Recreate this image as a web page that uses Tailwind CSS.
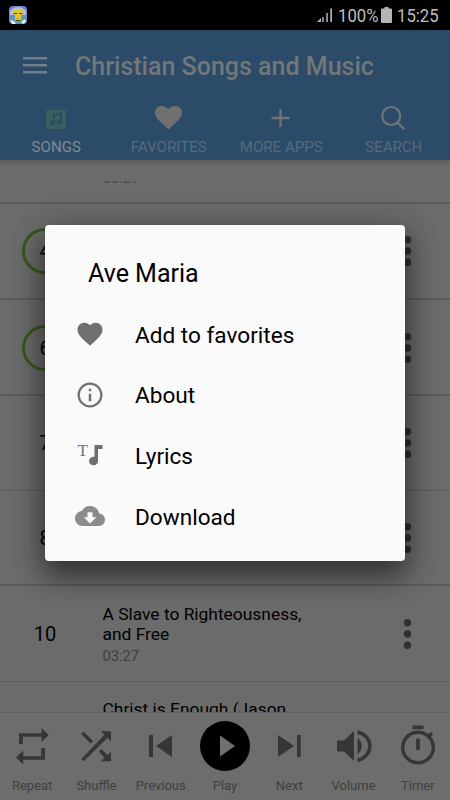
<!DOCTYPE html>
<html lang="en">
<head>
<meta charset="utf-8">
<meta name="viewport" content="width=device-width, initial-scale=1">
<title>Christian Songs and Music</title>
<script src="https://cdn.jsdelivr.net/npm/@tailwindcss/browser@4"></script>
</head>
<body class="bg-[#6b6b6b] font-[Roboto,sans-serif]">
<div class="relative flex h-[800px] w-[450px] flex-col overflow-hidden bg-[#6b6b6b]">
  <!-- Status bar -->
  <div class="flex h-[30px] shrink-0 items-center bg-black pl-[9px] pr-[12px] text-[#bdbdbd]">
    <svg class="h-[18px] w-[18px]" viewBox="0 0 18 18"><rect width="18" height="18" rx="4" fill="#6b86c8"/><path d="M1 5Q9-3 17 5V9H1Z" fill="#b5b9e6"/><path d="M2 10h14v4l-4 3H5l-3-3Z" fill="#5d9ab8"/><path d="M3 5.500Q9-.5 15 5.500L14 8.500H12V14L9 15.500 6 14V8.500H4Z" fill="#e0c928"/><path d="M4.500 7.500h3.500M10 7.500h3.500M7 14.500h4" stroke="#53491b"/><path d="M1 14l4 1 2 3H3ZM12 16l4-3 1 3-3 2Z" fill="#e8eef6"/><path d="M8 12.500h2" stroke="#e07c25"/></svg>
    <svg class="ml-auto h-[16px] w-[16px]" viewBox="0 0 16 16" fill="#b5b5b5"><path d="M0 15l4-4v4zM5.300 10h1.400v5H5.300zM9.300 6h1.500v9H9.300zM13.300 1.500H15V15h-1.700z"/></svg>
    <span class="ml-[5px] w-[40px] origin-left scale-x-[.88] whitespace-nowrap text-[19px] leading-[31px]">100%</span>
    <svg class="ml-[3px] h-[16px] w-[11px]" viewBox="0 0 11 16" fill="#b5b5b5"><path d="M3.500 0h4v1.500H10q1 0 1 1V15q0 1-1 1H1q-1 0-1-1V2.500q0-1 1-1h2.500z"/></svg>
    <span class="ml-[5px] w-[41px] origin-left scale-x-[.88] whitespace-nowrap text-[19px] leading-[31px]">15:25</span>
  </div>
  <!-- App bar -->
  <header class="z-10 flex h-[130px] shrink-0 flex-col bg-[#2c4b69] shadow-[0_2px_5px_rgba(0,0,0,.22)]">
    <div class="flex h-[73px] items-center pl-[23px] text-[#727778]">
      <svg class="h-[18px] w-[24px] -translate-y-[1.500px]" viewBox="0 0 24 18" fill="#727e89"><path d="M0 .5h24v2.600H0zM0 7.500h24v2.600H0zM0 14.400h24v2.600H0z"/></svg>
      <h1 class="ml-[28px] text-[25px] leading-[72px] font-medium whitespace-nowrap">Christian Songs and Music</h1>
    </div>
    <nav class="grid h-[57px] grid-cols-4 text-center text-[15.100px] text-[#58697a]">
      <div class="flex flex-col items-center text-[#818a92]"><svg class="h-[30px] w-[30px]" viewBox="0 0 30 30"><path d="M5 9Q5 7 7 7h16v0h2v17q0 2-2 2H7q-2 0-2-2z" fill="#38605f"/><path d="M5.500 4.800h18" stroke="#375863"/><path d="M13 19V12l7-1.500v8" fill="none" stroke="#2b4c61" stroke-width="2"/><circle cx="11.500" cy="20" r="2.500" fill="#2b4c61"/><circle cx="18.500" cy="19" r="2.500" fill="#2b4c61"/></svg><span class="mt-[4px] leading-[20px]">SONGS</span></div>
      <div class="flex flex-col items-center"><svg class="h-[30px] w-[30px] -translate-x-[.5px]" viewBox="0 0 30 30" fill="#707070"><path d="M15 26.500L13 24.700C6 18.300 1.500 14.300 1.500 9.800c0-4 3-6.700 6.800-6.700 2.600 0 5 1.200 6.700 3.200 1.700-2 4.100-3.200 6.700-3.200 3.800 0 6.800 2.700 6.800 6.700 0 4.500-4.500 8.500-11.500 14.900z"/></svg><span class="mt-[4px] leading-[20px]">FAVORITES</span></div>
      <div class="flex flex-col items-center"><svg class="h-[30px] w-[30px] -translate-x-[.5px]" viewBox="0 0 30 30" stroke="#707477" stroke-width="2.300"><path d="M15 6v18M6 15h18"/></svg><span class="mt-[4px] leading-[20px]">MORE APPS</span></div>
      <div class="flex flex-col items-center"><svg class="h-[30px] w-[30px] -translate-x-[.5px]" viewBox="0 0 30 30" fill="none" stroke="#707477" stroke-width="2.200"><circle cx="12.700" cy="13" r="9"/><path d="M19 19.500l6.700 6.700"/></svg><span class="mt-[4px] leading-[20px]">SEARCH</span></div>
    </nav>
  </header>
  <!-- Song list -->
  <main class="flex h-[553px] shrink-0 flex-col overflow-hidden text-black">
    <div class="flex h-[44px] shrink-0 flex-col justify-end border-b-2 border-[#5b5b5b] pb-[19px] pl-[103px]"><div class="flex h-[2px] items-end overflow-hidden text-[14.600px] leading-[10px] text-[#484848]"><span>03:27</span></div></div>
    <div class="flex h-[96px] shrink-0 items-center border-b-2 border-[#5b5b5b] pl-[22px]"><span class="grid h-[46px] w-[46px] place-items-center rounded-full border-[3px] border-[#39561f] text-[20px]">4</span><svg class="ml-auto mr-[38px] h-[30px] w-[9px]" viewBox="0 0 9 30" fill="#303030"><circle cx="4.500" cy="3.800" r="3.700"/><circle cx="4.500" cy="15" r="3.700"/><circle cx="4.500" cy="26.200" r="3.700"/></svg></div>
    <div class="flex h-[96px] shrink-0 items-center border-b-2 border-[#5b5b5b] pl-[22px] pt-[1px]"><span class="grid h-[46px] w-[46px] place-items-center rounded-full border-[3px] border-[#39561f] text-[20px]">6</span><svg class="ml-auto mr-[38px] h-[30px] w-[9px]" viewBox="0 0 9 30" fill="#303030"><circle cx="4.500" cy="3.800" r="3.700"/><circle cx="4.500" cy="15" r="3.700"/><circle cx="4.500" cy="26.200" r="3.700"/></svg></div>
    <div class="flex h-[95px] shrink-0 items-center border-b border-[#5b5b5b] pl-[22px]"><span class="grid h-[46px] w-[46px] place-items-center text-[20px]">7</span><svg class="ml-auto mr-[38px] h-[30px] w-[9px]" viewBox="0 0 9 30" fill="#303030"><circle cx="4.500" cy="3.800" r="3.700"/><circle cx="4.500" cy="15" r="3.700"/><circle cx="4.500" cy="26.200" r="3.700"/></svg></div>
    <div class="flex h-[95px] shrink-0 items-center border-b-2 border-[#5b5b5b] pl-[22px]"><span class="grid h-[46px] w-[46px] place-items-center text-[20px]">8</span><svg class="ml-auto mr-[38px] h-[30px] w-[9px]" viewBox="0 0 9 30" fill="#303030"><circle cx="4.500" cy="3.800" r="3.700"/><circle cx="4.500" cy="15" r="3.700"/><circle cx="4.500" cy="26.200" r="3.700"/></svg></div>
    <div class="flex h-[96px] shrink-0 items-center border-b border-[#5b5b5b] pl-[22px]">
      <span class="grid h-[46px] w-[46px] place-items-center text-[20px]">10</span>
      <div class="ml-[34.500px] w-[230px] pt-[3px]"><p class="text-[17.400px] leading-[20px]">A Slave to Righteousness,<br>and Free</p><p class="mt-[2px] text-[14.700px] leading-[20px] text-[#404040]">03:27</p></div>
      <svg class="ml-auto mr-[38px] h-[30px] w-[9px]" viewBox="0 0 9 30" fill="#303030"><circle cx="4.500" cy="3.800" r="3.700"/><circle cx="4.500" cy="15" r="3.700"/><circle cx="4.500" cy="26.200" r="3.700"/></svg>
    </div>
    <div class="h-[31px] shrink-0 overflow-hidden border-b border-[#5f5f5f] pl-[102.500px] pt-[17px] text-[17.400px] leading-[20px]">Christ is Enough (Jason</div>
  </main>
  <!-- Player controls -->
  <footer class="grid h-[87px] shrink-0 grid-cols-7 bg-[#6d6d6d] text-center text-[13px] text-[#404040]">
    <div class="flex flex-col items-center pt-[12px]"><svg class="h-[42px] w-[42px]" viewBox="0 0 42 42" fill="#363636"><path d="M8 19V8.300h22.500V3l7.200 7-7.200 7v-5.200H11.800V19zM34 23v11.700H12.300V39.500l-7.300-7 7.300-7v5.700h17.900V23z"/></svg><span class="mt-[9px] leading-[20px]">Repeat</span></div>
    <div class="flex flex-col items-center pt-[12px]"><svg class="h-[42px] w-[42px]" viewBox="0 0 42 42" fill="#363636"><path d="M26 6.300h10v10l-3.500-3.500L8.700 36.300 6.300 33.900 29.500 9.800zM8.500 6.500l9.500 9.500-2.400 2.400L6.200 8.900zM26.500 24l6 6L36 26.500v9.800H26l3.500-3.500-5.500-6z"/></svg><span class="mt-[9px] leading-[20px]">Shuffle</span></div>
    <div class="flex flex-col items-center pt-[12px]"><svg class="h-[42px] w-[42px]" viewBox="0 0 42 42" fill="#363636"><path d="M9 10h4v22H9zM32 10v22L16 21z"/></svg><span class="mt-[9px] leading-[20px]">Previous</span></div>
    <div class="flex flex-col items-center pt-[8px]"><svg class="h-[50px] w-[50px]" viewBox="0 0 50 50"><circle cx="25" cy="25" r="25" fill="#000"/><path d="M20 14.500v21L35 25z" fill="#707070"/></svg><span class="mt-[5px] leading-[20px]">Play</span></div>
    <div class="flex flex-col items-center pt-[12px]"><svg class="h-[42px] w-[42px]" viewBox="0 0 42 42" fill="#363636"><path d="M10 10v22L26 21zM29 10h3.700v22H29z"/></svg><span class="mt-[9px] leading-[20px]">Next</span></div>
    <div class="flex flex-col items-center pt-[12px]"><svg class="h-[42px] w-[42px]" viewBox="0 0 42 42" fill="#363636"><path d="M4 15.500h7L21 6v30L11 26.500H4zM24.500 13c5.700 3.500 5.700 12.500 0 16z"/><path d="M24.500 7C41 11 41 31 24.500 35.500" fill="none" stroke="#363636" stroke-width="3.500"/></svg><span class="mt-[9px] leading-[20px]">Volume</span></div>
    <div class="flex flex-col items-center pt-[12px]"><svg class="h-[42px] w-[42px]" viewBox="0 0 42 42" fill="none" stroke="#363636"><circle cx="21" cy="22.500" r="15.300" stroke-width="3.400"/><path d="M15.500 2.300h11M21 13.500v11.500" stroke-width="3.700"/><path d="M30.500 12.500l4.500-4.500" stroke-width="3.300"/></svg><span class="mt-[9px] leading-[20px]">Timer</span></div>
  </footer>
  <!-- Song menu -->
  <section class="absolute left-[45px] top-[225px] z-20 h-[336px] w-[360px] rounded-[4px] bg-[#fafafa] pt-[29px] text-black shadow-[0_14px_28px_2px_rgba(0,0,0,.45),0_4px_36px_rgba(0,0,0,.2)]">
    <h2 class="pl-[43px] text-[25px] leading-[40px]">Ave Maria</h2>
    <ul class="mt-[10px] text-[22.600px]">
      <li class="flex h-[60.600px] items-center pl-[30px]"><svg class="h-[30px] w-[30px]" viewBox="0 0 24 24" fill="#707070"><path d="M12 21.350l-1.450-1.320C5.400 15.360 2 12.280 2 8.500 2 5.420 4.420 3 7.500 3c1.740 0 3.410.81 4.500 2.090C13.090 3.810 14.760 3 16.500 3 19.580 3 22 5.420 22 8.500c0 3.780-3.400 6.860-8.550 11.540z"/></svg><span class="ml-[30px] pt-[3px]">Add to favorites</span></li>
      <li class="flex h-[60.600px] items-center pl-[30px]"><svg class="h-[30px] w-[30px]" viewBox="0 0 24 24" fill="#707070"><path d="M11 17h2v-6h-2zM12 2a10 10 0 1 0 0 20 10 10 0 0 0 0-20zm0 18.200a8.200 8.200 0 1 1 0-16.400 8.200 8.200 0 0 1 0 16.400zM11 9h2V7h-2z"/></svg><span class="ml-[30px] pt-[3px]">About</span></li>
      <li class="flex h-[60.600px] items-center pl-[30px]"><svg class="h-[30px] w-[30px]" viewBox="0 0 30 30" fill="#707070"><text x="2.500" y="16" font-family="Liberation Serif,serif" font-size="17">T</text><path d="M19.500 5H27.500v4H23v12.500a4.500 4.300 0 1 1-3.500-4.700z"/></svg><span class="ml-[30px] pt-[3px]">Lyrics</span></li>
      <li class="flex h-[60.600px] items-center pl-[30px]"><svg class="h-[30px] w-[30px]" viewBox="0 0 24 24" fill="#8b8b8b"><path d="M19.350 10.040C18.670 6.590 15.640 4 12 4 9.110 4 6.600 5.640 5.350 8.040 2.340 8.360 0 10.910 0 14c0 3.310 2.690 6 6 6h13c2.760 0 5-2.240 5-5 0-2.640-2.050-4.780-4.650-4.960zM17 13l-5 5-5-5h3V9h4v4h3z"/></svg><span class="ml-[30px] pt-[3px]">Download</span></li>
    </ul>
  </section>
</div>
</body>
</html>
